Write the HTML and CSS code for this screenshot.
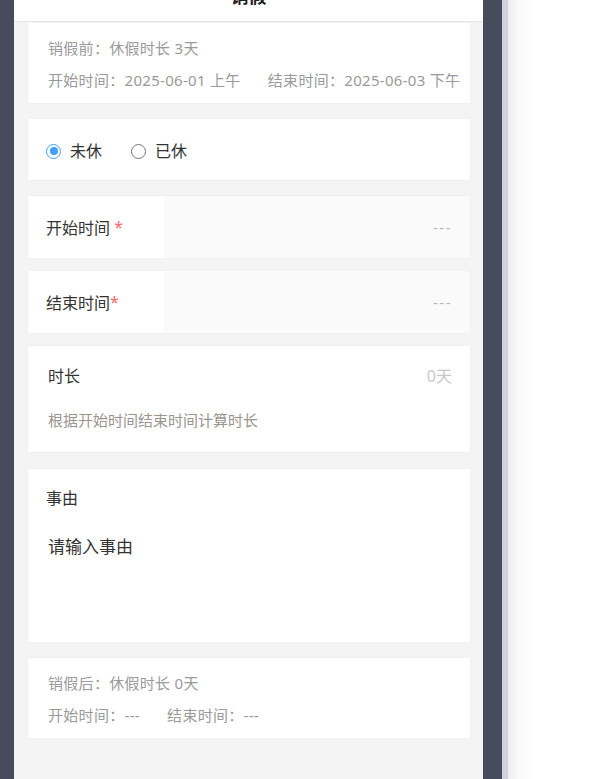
FILE: index.html
```html
<!DOCTYPE html>
<html lang="zh-CN">
<head>
    <meta charset="UTF-8">
    <meta name="viewport" content="width=device-width, initial-scale=1.0">
    <title>销假</title>
    <link rel="stylesheet" href="styles.css">
</head>
<body>
<div class="bezel bezel-left"></div>

<div class="phone">
    <header class="top-bar">
        <h1 class="top-title">销假</h1>
    </header>

    <div class="content">
        <div class="card summary">
            <p class="summary-line">销假前：休假时长 3天</p>
            <p class="summary-line">
                <span class="summary-item">开始时间：2025-06-01 上午</span>
                <span>结束时间：2025-06-03 下午</span>
            </p>
        </div>

        <div class="card radios">
            <label class="radio checked"><span class="radio-dot"></span>未休</label>
            <label class="radio"><span class="radio-dot"></span>已休</label>
        </div>

        <div class="card field">
            <div class="field-label">开始时间 <span class="star">*</span></div>
            <div class="field-value">---</div>
        </div>

        <div class="card field field-last">
            <div class="field-label">结束时间<span class="star">*</span></div>
            <div class="field-value">---</div>
        </div>

        <div class="card duration">
            <div class="duration-row">
                <span class="duration-label">时长</span>
                <span class="duration-value">0天</span>
            </div>
            <p class="duration-hint">根据开始时间结束时间计算时长</p>
        </div>

        <div class="card reason">
            <div class="reason-label">事由</div>
            <textarea class="reason-input" placeholder="请输入事由"></textarea>
        </div>

        <div class="card summary">
            <p class="summary-line">销假后：休假时长 0天</p>
            <p class="summary-line">
                <span class="summary-item">开始时间：---</span>
                <span>结束时间：---</span>
            </p>
        </div>
    </div>
</div>

<div class="bezel bezel-right"></div>
<div class="edge"></div>
<div class="side"></div>
</body>
</html>
```

FILE: styles.css
```css
body{
    margin: 0;
    height: 100vh;
    overflow: hidden;
    display: flex;
    flex-direction: row;
    background: #fff;
    font-family: "Noto Sans", "Noto Sans CJK SC", sans-serif;
}

.bezel{
    background: #474c5c;
    flex-shrink: 0;
}
.bezel-left{
    width: 14px;
}
.bezel-right{
    width: 19px;
}
.edge{
    width: 6px;
    flex-shrink: 0;
    background: #d1d1de;
}
.side{
    flex: 1;
    background: linear-gradient(90deg, #ededed, #f9f9f9 10px, #fff 24px);
}

.phone{
    width: 469px;
    flex-shrink: 0;
    background: #f4f4f4;
    display: flex;
    flex-direction: column;
}

.top-bar{
    height: 21px;
    overflow: hidden;
    background: #fff;
    border-bottom: 1px solid #e6e6e6;
    display: flex;
    justify-content: center;
    align-items: flex-end;
}
.top-title{
    margin: 0 0 15px;
    font-size: 18px;
    line-height: 20px;
    font-weight: bold;
    color: #222;
}

.content{
    padding: 1px 13px 0 14px;
    display: flex;
    flex-direction: column;
}

.card{
    background: #fff;
    box-shadow: 0 0 0 1px #f1f1f1;
    margin-bottom: 16px;
}

/* summary */
.summary{
    padding: 14px 20px 12px;
}
.summary-line{
    margin: 0;
    font-size: 15px;
    line-height: 22px;
    color: #9a9a9a;
    white-space: nowrap;
    letter-spacing: 0.3px;
}
.summary-line + .summary-line{
    margin-top: 10px;
}
.summary-item{
    margin-right: 23px;
}

/* radios */
.radios{
    padding: 21px 18px 18px;
    display: flex;
    flex-direction: row;
    align-items: center;
    gap: 29px;
}
.radio{
    display: flex;
    align-items: center;
    font-size: 16px;
    line-height: 22px;
    color: #333;
}
.radio-dot{
    box-sizing: border-box;
    width: 15px;
    height: 15px;
    border-radius: 50%;
    border: 1px solid #777;
    margin-right: 9px;
    display: flex;
    justify-content: center;
    align-items: center;
}
.checked .radio-dot{
    border: 1.5px solid #409eff;
}
.checked .radio-dot::after{
    content: "";
    width: 8px;
    height: 8px;
    border-radius: 50%;
    background: #409eff;
}

/* start / end fields */
.field{
    height: 62px;
    display: flex;
    flex-direction: row;
    margin-bottom: 13px;
}
.field-label{
    width: 118px;
    padding-left: 18px;
    display: flex;
    align-items: center;
    font-size: 16px;
    color: #333;
    white-space: pre;
}
.star{
    color: #f56c6c;
}
.field-value{
    flex: 1;
    background: #fafafa;
    display: flex;
    align-items: center;
    justify-content: flex-end;
    padding-right: 18px;
    font-size: 15px;
    color: #b4b4b4;
    letter-spacing: 1.5px;
}

/* duration */
.duration{
    padding: 19px 18px 21px 20px;
    margin-bottom: 17px;
}
.duration-row{
    display: flex;
    justify-content: space-between;
    font-size: 16px;
    line-height: 22px;
}
.duration-label{
    color: #333;
}
.duration-value{
    color: #c8c8c8;
}
.duration-hint{
    margin: 22px 0 0;
    font-size: 15px;
    line-height: 22px;
    color: #9b9590;
}

/* reason */
.reason{
    padding: 18px 18px 17px;
    display: flex;
    flex-direction: column;
}
.reason-label{
    font-size: 16px;
    line-height: 22px;
    color: #333;
}
.reason-input{
    margin: 26px 0 0 2px;
    padding: 0;
    height: 90px;
    border: none;
    outline: none;
    resize: none;
    font-family: "Noto Sans", "Noto Sans CJK SC", sans-serif;
    font-size: 17px;
    line-height: 24px;
    color: #333;
    background: transparent;
}
.reason-input::placeholder{
    color: #333;
}
```
